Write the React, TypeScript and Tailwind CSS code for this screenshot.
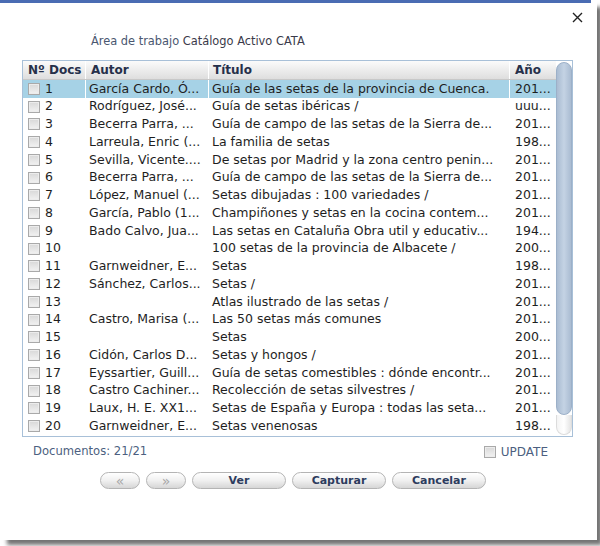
import React from "react";

const rows = [
  ["1", "García Cardo, Ó...", "Guía de las setas de la provincia de Cuenca.", "201..."],
  ["2", "Rodríguez, José...", "Guía de setas ibéricas /", "uuu..."],
  ["3", "Becerra Parra, ...", "Guía de campo de las setas de la Sierra de...", "201..."],
  ["4", "Larreula, Enric (...", "La familia de setas", "198..."],
  ["5", "Sevilla, Vicente....", "De setas por Madrid y la zona centro penin...", "201..."],
  ["6", "Becerra Parra, ...", "Guía de campo de las setas de la Sierra de...", "201..."],
  ["7", "López, Manuel (...", "Setas dibujadas : 100 variedades /", "201..."],
  ["8", "García, Pablo (1...", "Champiñones y setas en la cocina contem...", "201..."],
  ["9", "Bado Calvo, Jua...", "Las setas en Cataluña Obra util y educativ...", "194..."],
  ["10", "", "100 setas de la provincia de Albacete /", "200..."],
  ["11", "Garnweidner, E...", "Setas", "198..."],
  ["12", "Sánchez, Carlos...", "Setas /", "201..."],
  ["13", "", "Atlas ilustrado de las setas /", "201..."],
  ["14", "Castro, Marisa (...", "Las 50 setas más comunes", "201..."],
  ["15", "", "Setas", "200..."],
  ["16", "Cidón, Carlos D...", "Setas y hongos /", "201..."],
  ["17", "Eyssartier, Guill...", "Guía de setas comestibles : dónde encontr...", "201..."],
  ["18", "Castro Cachiner...", "Recolección de setas silvestres /", "201..."],
  ["19", "Laux, H. E. XX1...", "Setas de España y Europa : todas las seta...", "201..."],
  ["20", "Garnweidner, E...", "Setas venenosas", "198..."],
];

function Box() {
  return (
    <span className="inline-block w-[12px] h-[12px] border border-[#a9a9a9] bg-gradient-to-b from-[#d8d8d8] to-[#f2f2f2] shadow-[inset_0_0_0_1px_#ececec]" />
  );
}

function Btn({ label, w, dim }: { label: string; w: string; dim?: boolean }) {
  return (
    <button
      className={`${w} h-[17px] rounded-full border border-[#b4b4b4] bg-gradient-to-b from-[#ffffff] via-[#f0f0f0] to-[#d6d6d6] leading-none flex items-center justify-center ${dim ? "text-[#a8a8a8] text-[14px] font-normal" : "text-[#2d3c5e] text-[11px] font-bold"}`}
    >
      {label}
    </button>
  );
}

export default function App() {
  return (
    <div className="w-[600px] h-[546px] bg-white relative font-['DejaVu_Sans',Verdana,sans-serif]">
      <div className="w-[597px] h-[540px] shadow-[6px_6px_4px_-1px_rgba(0,0,0,0.55)] bg-white">
        <div className="w-[591px] h-[535px] bg-white border-t-[3px] border-[#4a6cb3] flex flex-col">
          <div className="flex justify-end pr-[8px] pt-[9px] h-[24px]">
            <svg width="11" height="11" viewBox="0 0 11 11">
              <path d="M1 1L10 10M10 1L1 10" stroke="#222" strokeWidth="1.4" />
            </svg>
          </div>
          <div className="pl-[91px] pt-[6px] h-[33px] text-[11.4px] text-[#3a3a4a]">
            <span className="text-[#4a5770]">Área de trabajo</span> Catálogo Activo CATA
          </div>
          <div className="ml-[22px] w-[551px] h-[377px] border border-[#a8c0d8] flex">
            <div className="flex-1 flex flex-col">
              <div className="h-[19px] flex bg-gradient-to-b from-[#fbfbfb] to-[#dedede] text-[12px] font-bold text-[#26304a] border-b border-[#c8c8c8]">
                <div className="w-[63px] pl-[5px] flex items-center border-r border-white">Nº Docs</div>
                <div className="w-[123px] pl-[5px] flex items-center border-r border-white">Autor</div>
                <div className="w-[301px] pl-[4px] flex items-center border-r border-white">Título</div>
                <div className="flex-1 pl-[5px] flex items-center">Año</div>
              </div>
              {rows.map((r, i) => (
                <div
                  key={r[0]}
                  className={`h-[17.75px] flex text-[12.5px] text-[#1e1e1e] leading-none ${i === 0 ? "bg-[#a6d2e6]" : "bg-white"}`}
                >
                  <div className="w-[63px] pl-[5px] flex items-center gap-[5px] border-r border-white">
                    <Box />
                    <span>{r[0]}</span>
                  </div>
                  <div className="w-[123px] pl-[3px] flex items-center border-r border-white whitespace-nowrap overflow-hidden">{r[1]}</div>
                  <div className="w-[301px] pl-[3px] flex items-center border-r border-white whitespace-nowrap overflow-hidden">{r[2]}</div>
                  <div className="flex-1 pl-[5px] flex items-center whitespace-nowrap overflow-hidden">{r[3]}</div>
                </div>
              ))}
            </div>
            <div className="w-[16px] flex flex-col pt-[1px] pb-[1px]">
              <div className="flex-1 rounded-t-full rounded-b-full bg-gradient-to-r from-[#aabcd2] via-[#c4d3e4] to-[#aabcd2] border border-[#9cb0c8]" />
              <div className="h-[20px] rounded-b-full bg-gradient-to-r from-[#f4f4f4] via-white to-[#e4e4e4] border border-[#dcdcdc] border-t-0" />
            </div>
          </div>
          <div className="flex items-center justify-between pl-[33px] pr-[43px] pt-[5px] h-[24px]">
            <span className="text-[11.6px] text-[#4c5f80]">Documentos: 21/21</span>
            <span className="flex items-center gap-[5px] text-[12px] text-[#4c5f80]">
              <Box />
              UPDATE
            </span>
          </div>
          <div className="flex pl-[100px] gap-[6px] pt-[11px]">
            <Btn label="«" w="w-[40px]" dim />
            <Btn label="»" w="w-[40px]" dim />
            <Btn label="Ver" w="w-[94px]" />
            <Btn label="Capturar" w="w-[94px]" />
            <Btn label="Cancelar" w="w-[94px]" />
          </div>
        </div>
      </div>
    </div>
  );
}
